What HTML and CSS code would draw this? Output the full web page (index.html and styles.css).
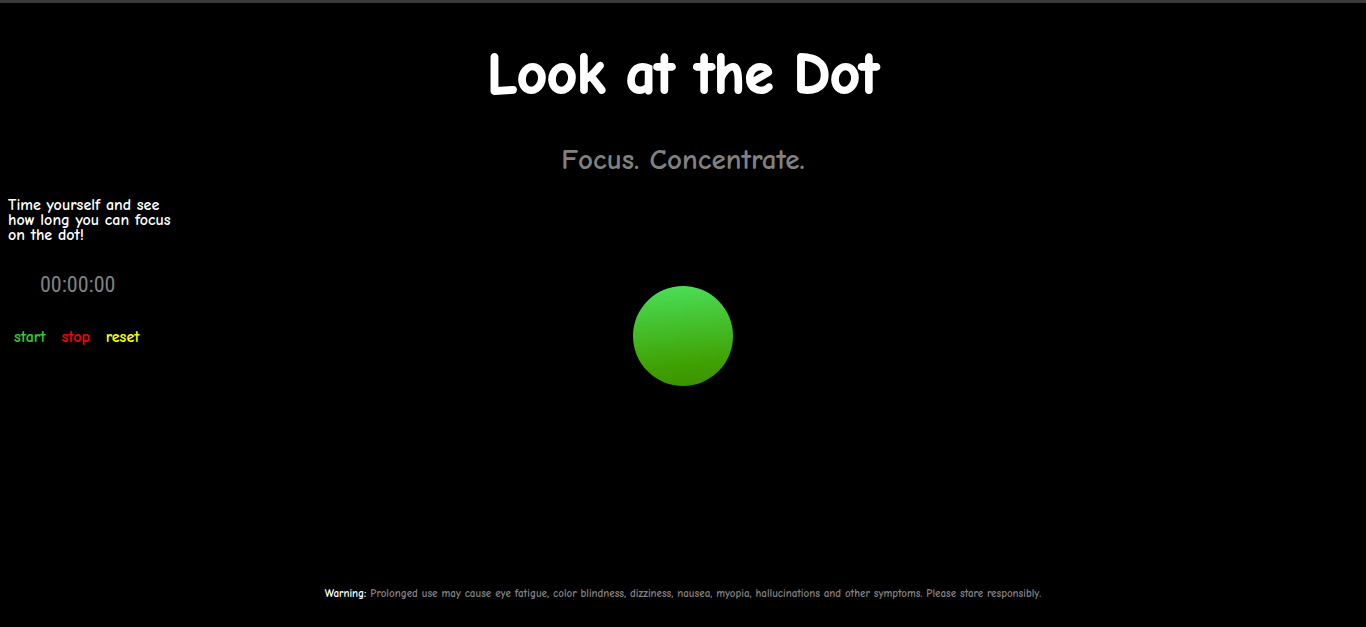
FILE: index.html
```html
<!DOCTYPE html>
<html lang="en">
<head>
<meta charset="utf-8">
<title>Look at the Dot</title>
<link rel="stylesheet" href="styles.css">
</head>
<body>
<header class="header">
  <h1 class="title">Look at the Dot</h1>
  <h2 class="subtitle">Focus. Concentrate.</h2>
</header>
<main class="content">
  <section class="timer">
    <p class="prompt">Time yourself and see<br>how long you can focus<br>on the dot!</p>
    <time class="clock">00:00:00</time>
    <div class="controls">
      <button class="control start" type="button">start</button>
      <button class="control stop" type="button">stop</button>
      <button class="control reset" type="button">reset</button>
    </div>
  </section>
  <div class="dot"></div>
</main>
<footer class="footer"><strong class="warning">Warning:</strong> Prolonged use may cause eye fatigue, color blindness, dizziness, nausea, myopia, hallucinations and other symptoms. Please stare responsibly.</footer>
</body>
</html>
```

FILE: styles.css
```css
* {
  box-sizing: border-box;
}

body {
  display: flex;
  flex-direction: column;
  min-height: 100vh;
  margin: 0;
  border-top: 3px solid #3a3a3a;
  background: #000;
  color: #fff;
  font-family: "Comic Sans MS", "Comic Neue", "Noto Sans", sans-serif;
}

.header {
  padding-top: 34px;
  text-align: center;
}

.title {
  margin: 0;
  font-size: 58px;
  line-height: 76px;
  -webkit-text-stroke: 2px #fff;
}

.subtitle {
  margin: 26px 0 0;
  color: #808080;
  font-size: 29px;
  line-height: 42px;
}

.content {
  display: grid;
  grid-template-columns: 1fr auto 1fr;
  flex: 1;
  padding: 17px 8px 0;
}

.prompt {
  margin: 0;
  font-size: 16px;
  font-weight: bold;
  line-height: 15px;
}

.clock {
  display: block;
  margin: 24px 32px 0;
  color: #808080;
  font-family: "Roboto Condensed", "Open Sans Condensed", sans-serif;
  font-size: 22px;
  line-height: 36px;
}

.controls {
  display: flex;
  gap: 4px;
  margin-top: 24px;
}

.control {
  padding: 0 6px;
  border: 0;
  background: transparent;
  font-family: inherit;
  font-size: 16px;
  font-weight: bold;
  line-height: 20px;
  cursor: pointer;
}

.start {
  color: #32cd32;
}

.stop {
  color: #f00;
}

.reset {
  color: #ff0;
}

.dot {
  width: 100px;
  height: 100px;
  margin-top: 88px;
  border-radius: 50%;
  background: linear-gradient(175deg, #4be05a 0%, #3fa000 78%, #3c9000 100%);
}

.footer {
  padding: 0 8px 24px;
  color: #808080;
  font-size: 11px;
  font-weight: bold;
  line-height: 18px;
  text-align: center;
}

.warning {
  color: #fff;
}
```
